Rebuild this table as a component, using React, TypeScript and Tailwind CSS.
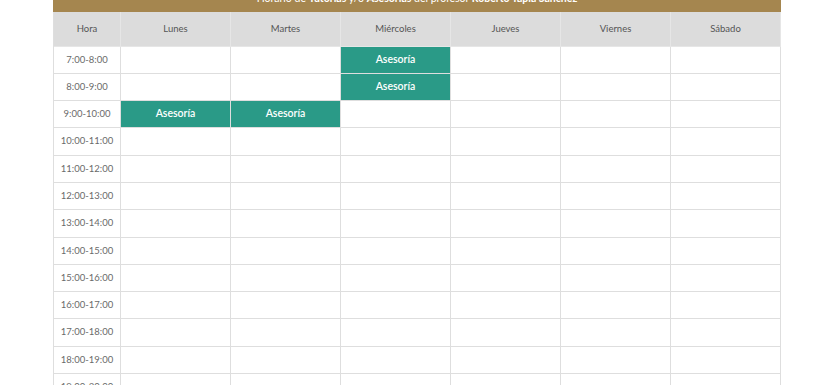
import React from "react";

const days = ["Lunes", "Martes", "Miércoles", "Jueves", "Viernes", "Sábado"];
const hours = [
  "7:00-8:00",
  "8:00-9:00",
  "9:00-10:00",
  "10:00-11:00",
  "11:00-12:00",
  "12:00-13:00",
  "13:00-14:00",
  "14:00-15:00",
  "15:00-16:00",
  "16:00-17:00",
  "17:00-18:00",
  "18:00-19:00",
  "19:00-20:00",
];

const busy: Record<string, boolean> = {
  "0-2": true,
  "1-2": true,
  "2-0": true,
  "2-1": true,
};

export default function App() {
  return (
    <div
      className="w-[840px] h-[385px] overflow-hidden bg-white"
      style={{ fontFamily: "Lato, 'Noto Sans', 'Liberation Sans', sans-serif" }}
    >
      <div className="ml-[53px] w-[728px]">
        <div className="mt-[-15px] h-[27px] bg-[#a5864f] flex items-center justify-center text-white text-[10.5px]">
          <span>
            Horario de <b>Tutorías</b> y/o <b>Asesorías</b> del profesor <b>Roberto Tapia Sánchez</b>
          </span>
        </div>
        <div className="grid grid-cols-[67px_repeat(6,1fr)] border-l border-[#dedede]">
          <div className="h-[34.5px] bg-[#dcdcdc] border-r border-b border-[#e6e6e6] flex items-center justify-center text-[9.5px] text-[#555]">
            Hora
          </div>
          {days.map((d) => (
            <div
              key={d}
              className="h-[34.5px] bg-[#dcdcdc] border-r border-b border-[#e6e6e6] flex items-center justify-center text-[9.5px] text-[#555]"
            >
              {d}
            </div>
          ))}
          {hours.map((h, r) => (
            <React.Fragment key={h}>
              <div className="h-[27.3px] border-r border-b border-[#dedede] flex items-center justify-center text-[9.5px] text-[#6a6a6a]">
                {h}
              </div>
              {days.map((d, c) =>
                busy[`${r}-${c}`] ? (
                  <div
                    key={d}
                    className="h-[27.3px] bg-[#2a9a87] border-r border-b border-[#dedede] flex items-center justify-center text-[10.5px] font-semibold text-white"
                  >
                    Asesoría
                  </div>
                ) : (
                  <div key={d} className="h-[27.3px] border-r border-b border-[#dedede]" />
                )
              )}
            </React.Fragment>
          ))}
        </div>
      </div>
    </div>
  );
}
